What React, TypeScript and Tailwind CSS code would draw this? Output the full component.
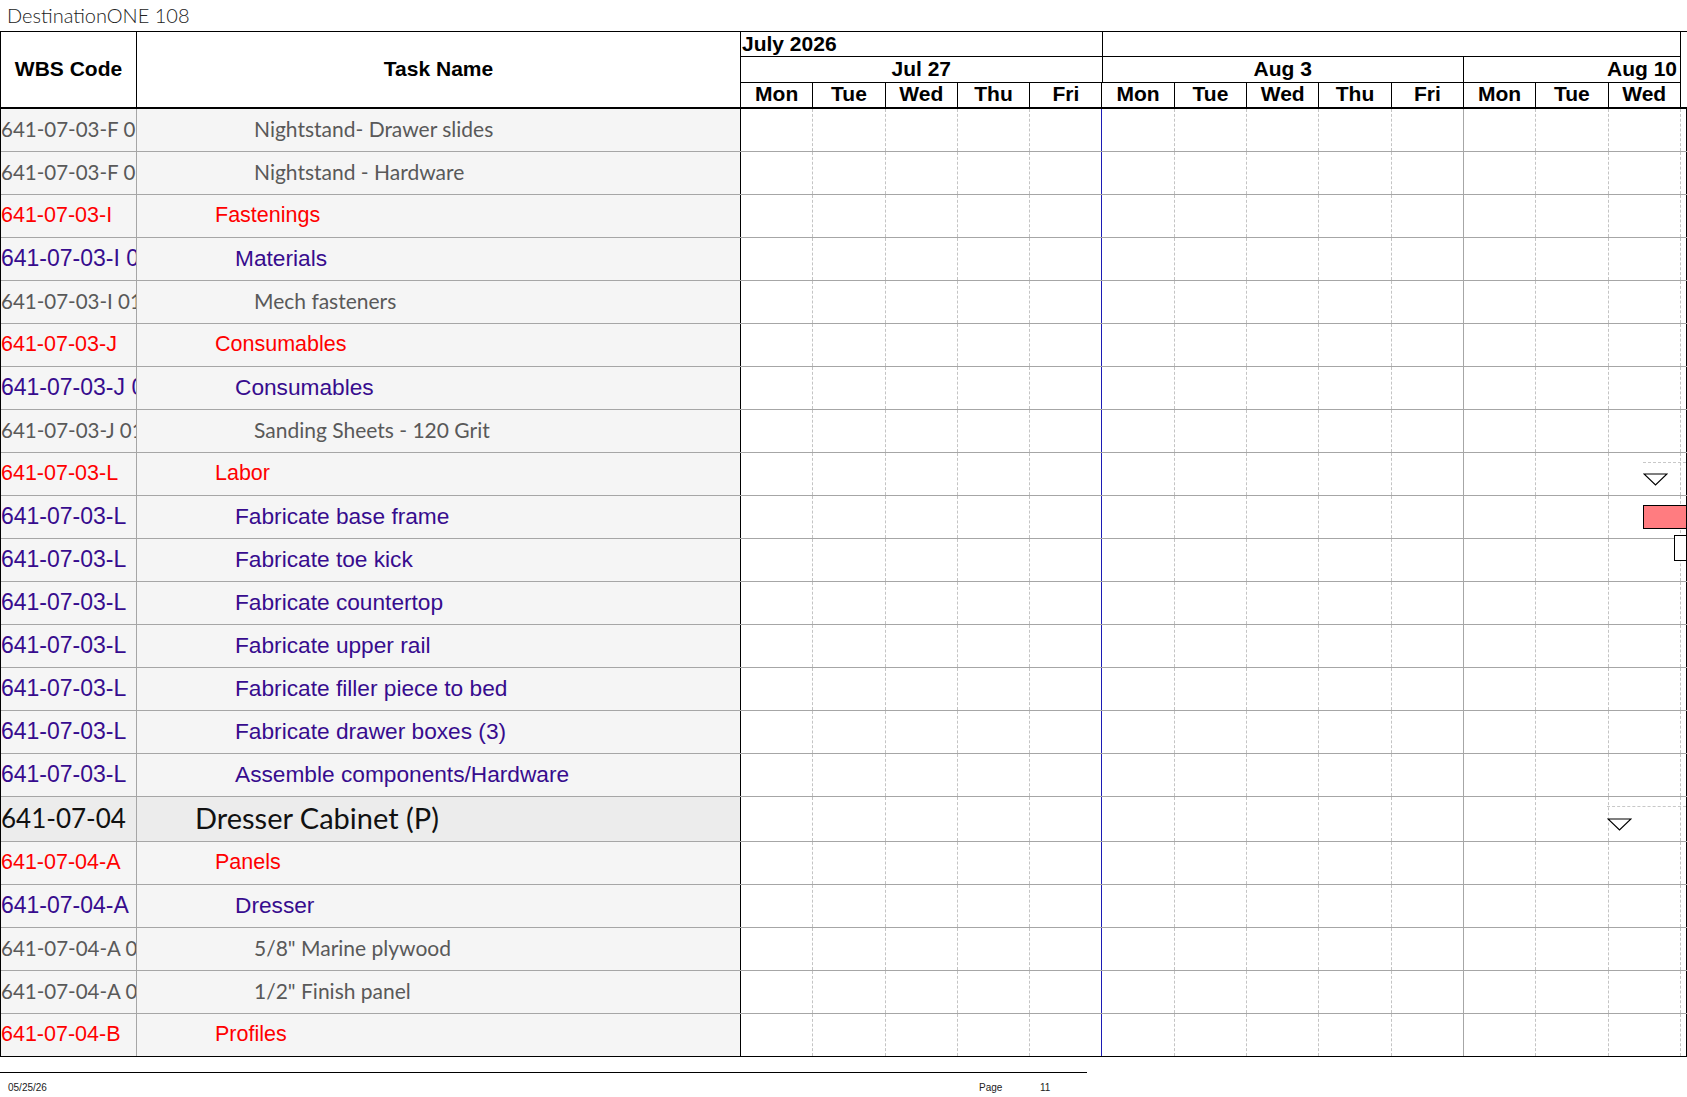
import React from "react";

type Kind = "gray" | "red" | "purple" | "top";

type Row = {
  code: string;
  name: string;
  kind: Kind;
  mark?: "summary" | "bar" | "box" | "summaryTop";
};

const rows: Row[] = [
  { code: "641-07-03-F 01", name: "Nightstand- Drawer slides", kind: "gray" },
  { code: "641-07-03-F 02", name: "Nightstand - Hardware", kind: "gray" },
  { code: "641-07-03-I", name: "Fastenings", kind: "red" },
  { code: "641-07-03-I 01", name: "Materials", kind: "purple" },
  { code: "641-07-03-I 01.01", name: "Mech fasteners", kind: "gray" },
  { code: "641-07-03-J", name: "Consumables", kind: "red" },
  { code: "641-07-03-J 01", name: "Consumables", kind: "purple" },
  { code: "641-07-03-J 01.01", name: "Sanding Sheets - 120 Grit", kind: "gray" },
  { code: "641-07-03-L", name: "Labor", kind: "red", mark: "summary" },
  { code: "641-07-03-L", name: "Fabricate base frame", kind: "purple", mark: "bar" },
  { code: "641-07-03-L", name: "Fabricate toe kick", kind: "purple", mark: "box" },
  { code: "641-07-03-L", name: "Fabricate countertop", kind: "purple" },
  { code: "641-07-03-L", name: "Fabricate upper rail", kind: "purple" },
  { code: "641-07-03-L", name: "Fabricate filler piece to bed", kind: "purple" },
  { code: "641-07-03-L", name: "Fabricate drawer boxes (3)", kind: "purple" },
  { code: "641-07-03-L", name: "Assemble components/Hardware", kind: "purple" },
  { code: "641-07-04", name: "Dresser Cabinet (P)", kind: "top", mark: "summaryTop" },
  { code: "641-07-04-A", name: "Panels", kind: "red" },
  { code: "641-07-04-A", name: "Dresser", kind: "purple" },
  { code: "641-07-04-A 01", name: '5/8" Marine plywood', kind: "gray" },
  { code: "641-07-04-A 02", name: '1/2" Finish panel', kind: "gray" },
  { code: "641-07-04-B", name: "Profiles", kind: "red" },
];

const days = ["Mon", "Tue", "Wed", "Thu", "Fri", "Mon", "Tue", "Wed", "Thu", "Fri", "Mon", "Tue", "Wed"];

const codeStyle: Record<Kind, string> = {
  gray: "font-['Lato',sans-serif] text-[20.5px] text-[#595959]",
  red: "font-['Liberation_Sans',Arial,sans-serif] text-[21.5px] text-[#ff0000]",
  purple: "font-['Liberation_Sans',Arial,sans-serif] text-[23px] text-[#370c8e]",
  top: "font-['Lato',sans-serif] text-[26px] text-[#111111]",
};

const nameStyle: Record<Kind, string> = {
  gray: "pl-[117px] font-['Lato',sans-serif] text-[21px] text-[#595959]",
  red: "pl-[78px] font-['Liberation_Sans',Arial,sans-serif] text-[21.5px] text-[#ff0000]",
  purple: "pl-[98px] font-['Liberation_Sans',Arial,sans-serif] text-[22.7px] text-[#370c8e]",
  top: "pl-[58px] font-['Lato',sans-serif] text-[29px] text-[#111111]",
};

function Triangle() {
  return (
    <svg width="25" height="13" viewBox="0 0 25 13">
      <polygon points="1,1 24,1 12.5,12" fill="white" stroke="black" strokeWidth="1.2" />
    </svg>
  );
}

function DayLines() {
  return (
    <div className="flex h-full">
      {days.map((_, i) => (
        <div
          key={i}
          className={
            i === 4
              ? "w-[72.3px] h-full shrink-0 border-r border-[#1c1cb4]"
              : i === 9
              ? "w-[72.3px] h-full shrink-0 border-r border-[#a6a6a6]"
              : "w-[72.3px] h-full shrink-0 border-r border-dashed border-[#c4c4c4]"
          }
        />
      ))}
      <div className="flex-1 h-full border-r border-black" />
    </div>
  );
}

function GanttMark({ mark }: { mark?: Row["mark"] }) {
  if (mark === "summary")
    return (
      <>
        <div className="absolute left-[902px] right-[1px] top-[9px] border-t border-dashed border-[#c8c8c8]" />
        <div className="absolute left-[902px] top-[20px]">
          <Triangle />
        </div>
      </>
    );
  if (mark === "summaryTop")
    return (
      <>
        <div className="absolute left-[866px] right-[1px] top-[9px] border-t border-dashed border-[#c8c8c8]" />
        <div className="absolute left-[866px] top-[21px]">
          <Triangle />
        </div>
      </>
    );
  if (mark === "bar")
    return <div className="absolute left-[902px] right-0 top-[9px] h-[24px] bg-[#ff7c80] border border-black" />;
  if (mark === "box")
    return <div className="absolute left-[933px] right-0 top-[-4px] h-[26px] bg-white border border-black" />;
  return null;
}

function TaskRow({ row, last }: { row: Row; last: boolean }) {
  const top = row.kind === "top";
  const bg = top ? "bg-[#ececec]" : "bg-[#f5f5f5]";
  return (
    <div
      className={`flex ${top ? "h-[45px]" : "h-[43px]"} border-b ${last ? "border-black" : "border-[#a6a6a6]"}`}
    >
      <div
        className={`w-[136px] shrink-0 ${bg} border-r border-[#a6a6a6] overflow-hidden whitespace-nowrap flex items-center pb-[2px] ${codeStyle[row.kind]}`}
      >
        {row.code}
      </div>
      <div
        className={`w-[604px] shrink-0 ${bg} border-r border-black whitespace-nowrap flex items-center pb-[2px] ${nameStyle[row.kind]}`}
      >
        {row.name}
      </div>
      <div className="flex-1 relative">
        <DayLines />
        <GanttMark mark={row.mark} />
      </div>
    </div>
  );
}

function Header() {
  const bold = "font-['Liberation_Sans',Arial,sans-serif] font-bold text-[21px] text-black";
  return (
    <div className={`flex h-[78px] border-t border-b-2 border-black ${bold}`}>
      <div className="w-[136px] shrink-0 border-r border-black flex items-center justify-center pb-[1px]">
        WBS Code
      </div>
      <div className="w-[604px] shrink-0 border-r border-black flex items-center justify-center pb-[1px]">
        Task Name
      </div>
      <div className="flex-1 flex flex-col">
        <div className="flex h-[25px] w-[940px] border-b border-black">
          <div className="w-[361.5px] shrink-0 border-r border-black flex items-center pl-[1px] pb-[2px] leading-none">
            July 2026
          </div>
          <div className="flex-1 border-r border-black" />
        </div>
        <div className="flex h-[26px] w-[940px] border-b border-black">
          <div className="w-[361.5px] shrink-0 border-r border-black flex items-center justify-center pb-[2px]">
            Jul 27
          </div>
          <div className="w-[361.5px] shrink-0 border-r border-black flex items-center justify-center pb-[2px]">
            Aug 3
          </div>
          <div className="flex-1 border-r border-black flex items-center justify-end pr-[3px] pb-[2px]">Aug 10</div>
        </div>
        <div className="flex flex-1 w-[940px]">
          {days.map((d, i) => (
            <div
              key={i}
              className="w-[72.3px] shrink-0 border-r border-black flex items-center justify-center pb-[3px] leading-none"
            >
              {d}
            </div>
          ))}
        </div>
      </div>
    </div>
  );
}

export default function App() {
  return (
    <div className="w-[1687px] h-[1097px] bg-white overflow-hidden">
      <div className="h-[31px] pl-[7px] pb-[2px] flex items-center font-['Lato',sans-serif] font-light text-[20px] text-[#222222]">
        DestinationONE 108
      </div>
      <div className="border-l border-black">
        <Header />
        {rows.map((r, i) => (
          <TaskRow key={i} row={r} last={i === rows.length - 1} />
        ))}
      </div>
      <div className="mt-[15px] w-[1087px] border-t border-black" />
      <div className="relative h-[20px] font-['Liberation_Sans',Arial,sans-serif] text-[10px] text-[#222222]">
        <span className="absolute left-[8px] top-[7px]">05/25/26</span>
        <span className="absolute left-[979px] top-[7px]">Page</span>
        <span className="absolute left-[1040px] top-[7px]">11</span>
      </div>
    </div>
  );
}
